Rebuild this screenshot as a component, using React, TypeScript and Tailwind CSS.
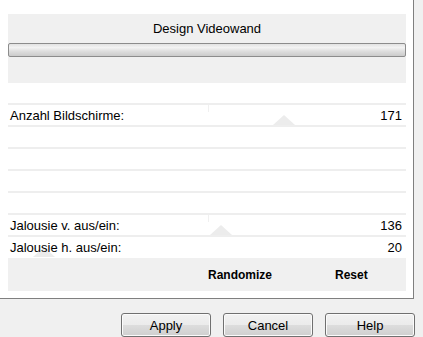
import React from "react";

const rows: { label: string; value: string; tri?: number; vline?: number }[] = [
  { label: "Anzahl Bildschirme:", value: "171", tri: 265, vline: 200 },
  { label: "", value: "" },
  { label: "", value: "" },
  { label: "", value: "" },
  { label: "", value: "" },
  { label: "Jalousie v. aus/ein:", value: "136", tri: 202, vline: 200 },
  { label: "Jalousie h. aus/ein:", value: "20", tri: 25 },
];

function Ghost({ left }: { left: number }) {
  return (
    <svg
      className="absolute bottom-0"
      style={{ left }}
      width="22"
      height="10"
      viewBox="0 0 22 10"
    >
      <polygon points="0,10 11,0 22,10" fill="#ececec" />
    </svg>
  );
}

function WinButton({ label }: { label: string }) {
  return (
    <button className="w-[90px] h-[24px] rounded-[3px] border border-[#707070] bg-[linear-gradient(to_bottom,#f2f2f2_0%,#ebebeb_50%,#dddddd_50%,#cfcfcf_100%)] shadow-[inset_0_0_0_1px_#fbfbfb] text-[13px] leading-[15px] text-black flex items-center justify-center">
      {label}
    </button>
  );
}

export default function App() {
  return (
    <div
      className="w-[423px] h-[337px] bg-[#f0f0f0] overflow-hidden"
      style={{ fontFamily: '"Liberation Sans", Arial, sans-serif' }}
    >
      <div className="w-[414px] h-[299px] bg-white border-r border-b border-[#7f7f7f] pl-[8px] pr-[7px] pt-[14px] flex flex-col">
        <div className="h-[69px] bg-[#f0f0f0] flex flex-col">
          <div className="pt-[7px] h-[29px] text-center text-[13px] leading-[15px] text-black">
            Design Videowand
          </div>
          <div className="h-[14px] rounded-[2px] border border-[#8c8c8c] bg-[linear-gradient(to_bottom,#e2e2e2_0%,#f3f3f3_30%,#dedede_60%,#cbcbcb_100%)]" />
        </div>
        <div className="h-[20px]" />
        <div className="flex flex-col">
          {rows.map((r, i) => (
            <div key={i} className="flex flex-col">
              <div className="h-[2px] bg-[#eeeeee]" />
              <div className="relative h-[20px] flex items-center justify-between pl-[2px] pr-[4px] text-[13px] leading-[15px] text-black">
                {r.vline !== undefined && (
                  <div
                    className="absolute top-0 w-px h-[7px] bg-[#f0f0f0]"
                    style={{ left: r.vline }}
                  />
                )}
                {r.tri !== undefined && <Ghost left={r.tri} />}
                <span className="relative">{r.label}</span>
                <span className="relative">{r.value}</span>
              </div>
            </div>
          ))}
        </div>
        <div className="h-[33px] mt-[1px] bg-[#f0f0f0] flex items-center text-[12px] leading-[14px] font-bold text-black">
          <span className="ml-[200px]">Randomize</span>
          <span className="ml-[63px]">Reset</span>
        </div>
      </div>
      <div className="flex gap-[12px] pl-[121px] pt-[14px]">
        <WinButton label="Apply" />
        <WinButton label="Cancel" />
        <WinButton label="Help" />
      </div>
    </div>
  );
}
